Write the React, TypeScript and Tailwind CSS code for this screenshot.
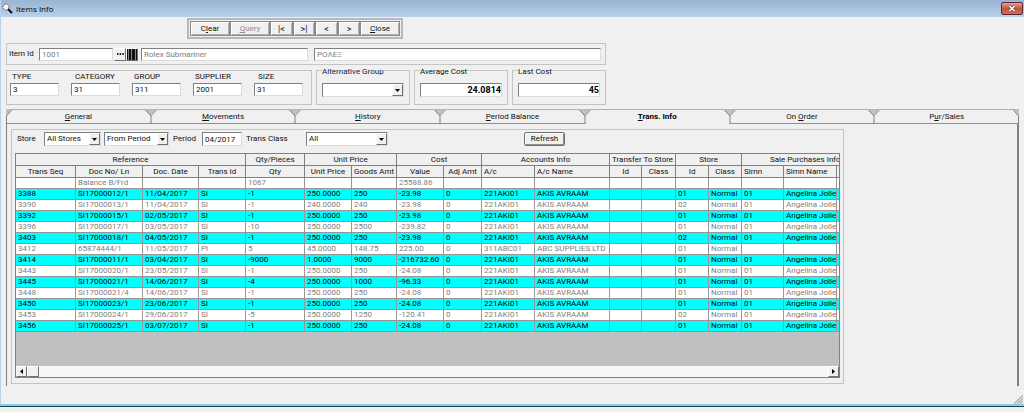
import { useState } from "react";
import type { ReactNode } from "react";
import clsx from "clsx";

type Row = string[];

const columns = [
  { label: "Trans Seq", width: "w-[60px]" },
  { label: "Doc No/ Ln", width: "w-[67px]" },
  { label: "Doc. Date", width: "w-[56px]" },
  { label: "Trans Id", width: "w-[47px]" },
  { label: "Qty", width: "w-[59px]" },
  { label: "Unit Price", width: "w-[47px]" },
  { label: "Goods Amt", width: "w-[45px]" },
  { label: "Value", width: "w-[47px]" },
  { label: "Adj Amt", width: "w-[38px]" },
  { label: "A/c", width: "w-[53px]", left: true },
  { label: "A/c Name", width: "w-[75px]", left: true },
  { label: "Id", width: "w-[32px]" },
  { label: "Class", width: "w-[34px]" },
  { label: "Id", width: "w-[33px]" },
  { label: "Class", width: "w-[33px]" },
  { label: "Slmn", width: "w-[42px]", left: true },
  { label: "Slmn Name", width: "w-[53px]", left: true },
  { label: "", width: "w-[60px]" },
];

const groups = [
  { label: "Reference", span: 4 },
  { label: "Qty/Pieces", span: 1 },
  { label: "Unit Price", span: 2 },
  { label: "Cost", span: 2 },
  { label: "Accounts Info", span: 2 },
  { label: "Transfer To Store", span: 2 },
  { label: "Store", span: 2 },
  { label: "Sale Purchases Information", span: 3 },
];

const sale = (
  seq: string,
  doc: string,
  date: string,
  qty: string,
  price: string,
  goods: string,
  value: string,
  store: string
): Row => [
  seq, doc, date, "SI", qty, price, goods, value, "0",
  "221AKI01", "AKIS AVRAAM", "", "", store, "Normal", "01", "Angelina Jolie", "",
];

const rows: Row[] = [
  ["", "Balance B/Frd", "", "", "1067", "", "", "25588.86", "", "", "", "", "", "", "", "", "", ""],
  sale("3388", "SI17000012/1", "11/04/2017", "-1", "250.0000", "250", "-23.98", "01"),
  sale("3390", "SI17000013/1", "11/04/2017", "-1", "240.0000", "240", "-23.98", "02"),
  sale("3392", "SI17000015/1", "02/05/2017", "-1", "250.0000", "250", "-23.98", "01"),
  sale("3396", "SI17000017/1", "03/05/2017", "-10", "250.0000", "2500", "-239.82", "01"),
  sale("3403", "SI17000018/1", "04/05/2017", "-1", "250.0000", "250", "-23.98", "02"),
  ["3412", "65874444/1", "11/05/2017", "PI", "5", "45.0000", "148.75", "225.00", "0", "311ABC01", "ABC SUPPLIES LTD", "", "", "01", "Normal", "", "", ""],
  sale("3414", "SI17000011/1", "03/04/2017", "-9000", "1.0000", "9000", "-216732.60", "01"),
  sale("3443", "SI17000020/1", "23/05/2017", "-1", "250.0000", "250", "-24.08", "01"),
  sale("3445", "SI17000021/1", "14/06/2017", "-4", "250.0000", "1000", "-96.33", "01"),
  sale("3448", "SI17000021/4", "14/06/2017", "-1", "250.0000", "250", "-24.08", "01"),
  sale("3450", "SI17000023/1", "23/06/2017", "-1", "250.0000", "250", "-24.08", "01"),
  sale("3453", "SI17000024/1", "29/06/2017", "-5", "250.0000", "1250", "-120.41", "02"),
  sale("3456", "SI17000025/1", "03/07/2017", "-1", "250.0000", "250", "-24.08", "01"),
];

const tabs: { id: string; label: ReactNode }[] = [
  { id: "general", label: <><u>G</u>eneral</> },
  { id: "movements", label: <><u>M</u>ovements</> },
  { id: "history", label: <><u>H</u>istory</> },
  { id: "balance", label: <><u>P</u>eriod Balance</> },
  { id: "trans", label: <><u>T</u>rans. Info</> },
  { id: "order", label: <>On <u>O</u>rder</> },
  { id: "sales", label: <>P<u>u</u>r/Sales</> },
];

const itemFields = [
  { id: "type", label: "TYPE", value: "3", indent: "pl-0.5" },
  { id: "category", label: "CATEGORY", value: "31", indent: "pl-1" },
  { id: "group", label: "GROUP", value: "311", indent: "pl-0.5" },
  { id: "supplier", label: "SUPPLIER", value: "2001", indent: "pl-0.5" },
  { id: "size", label: "SIZE", value: "31", indent: "pl-1" },
];

const sunken =
  "border border-t-[#808080] border-l-[#808080] border-r-[#dcdcdc] border-b-[#dcdcdc] bg-white";
const raised =
  "border border-t-white border-l-white border-r-[#707070] border-b-[#707070] bg-[#f0f0f0]";
const box = "border border-[#c4c4c4]";

function ToolButton({ children, className, disabled }: { children: ReactNode; className: string; disabled?: boolean }) {
  return (
    <button
      type="button"
      disabled={disabled}
      className={clsx(
        "flex h-[15px] items-center justify-center border border-[#8a8a8a] bg-[#f0f0f0] shadow-[inset_1px_1px_0_#fff,inset_-1px_-1px_0_#b0b0b0]",
        disabled && "text-[#8c8c8c]",
        className
      )}
    >
      {children}
    </button>
  );
}

function Select({ id, label, options, className }: { id: string; label: string; options: string[]; className: string }) {
  return (
    <div className={clsx("relative h-[14px]", sunken, className)}>
      <select id={id} aria-label={label} className="block h-3 w-full appearance-none bg-transparent pl-0.5 leading-3 outline-none">
        {options.map((o) => (
          <option key={o}>{o}</option>
        ))}
      </select>
      <span className={clsx("pointer-events-none absolute top-0 right-0 flex h-3 w-[11px] items-center justify-center", raised)}>
        <svg width="5" height="3" viewBox="0 0 5 3">
          <path d="M0 0h5L2.5 3z" fill="#000" />
        </svg>
      </span>
    </div>
  );
}

function TabNotch() {
  return (
    <svg className="absolute -top-px -right-[6px] z-10" width="12" height="15" viewBox="0 0 12 15">
      <path d="M0 0.5h12L6 7z" fill="#c0c0c0" />
      <path d="M0.5 1L6 7v8" fill="none" stroke="#808080" />
      <path d="M11.5 1L6 7" fill="none" stroke="#a0a0a0" />
    </svg>
  );
}

function TransGrid() {
  return (
    <div className="border border-[#808080] bg-[#c0c0c0]">
      <div className="h-[212px] overflow-hidden">
        <table className="w-[881px] table-fixed border-separate border-spacing-0">
          <colgroup>
            {columns.map((c, i) => (
              <col key={i} className={c.width} />
            ))}
          </colgroup>
          <thead>
            <tr className="h-3">
              {groups.map((g) => (
                <th
                  key={g.label}
                  colSpan={g.span}
                  className="h-3 overflow-hidden border-r border-b border-[#808080] bg-[#f0f0f0] p-0 leading-[11px] font-normal whitespace-nowrap"
                >
                  {g.label}
                </th>
              ))}
            </tr>
            <tr className="h-3">
              {columns.map((c, i) => (
                <th
                  key={i}
                  className={clsx(
                    "h-3 overflow-hidden border-r border-b border-[#808080] bg-[#f0f0f0] p-0 leading-[11px] font-normal whitespace-nowrap",
                    c.left && "pl-0.5 text-left"
                  )}
                >
                  {c.label}
                </th>
              ))}
            </tr>
          </thead>
          <tbody>
            {rows.map((row, r) => (
              <tr key={r} className={r % 2 ? "bg-[#00ffff] text-black" : "bg-white text-[#808080]"}>
                {row.map((cell, i) => (
                  <td
                    key={i}
                    className="h-[11px] overflow-hidden border-r border-b border-[#969696] py-0 pr-0 pl-0.5 leading-[10px] whitespace-nowrap"
                  >
                    {cell}
                  </td>
                ))}
              </tr>
            ))}
          </tbody>
        </table>
      </div>
      <div className="flex h-[11px] justify-between bg-[#f8f8f8]">
        <div className="flex">
          <button type="button" aria-label="Scroll left" className={clsx("flex w-[11px] items-center justify-center", raised)}>
            <svg width="3" height="5" viewBox="0 0 3 5">
              <path d="M3 0v5L0 2.5z" />
            </svg>
          </button>
          <div className={clsx("w-3", raised)} />
        </div>
        <button type="button" aria-label="Scroll right" className={clsx("flex w-[11px] items-center justify-center", raised)}>
          <svg width="3" height="5" viewBox="0 0 3 5">
            <path d="M0 0v5l3-2.5z" />
          </svg>
        </button>
      </div>
    </div>
  );
}

export default function App() {
  const [active, setActive] = useState("trans");

  return (
    <div className="min-h-screen bg-[#f0f0f0] font-['Roboto','Liberation_Sans',sans-serif] text-[8px] leading-[10px] text-[#101010]">
      <div className="border-b border-[#1f4552]">
        <div className="border-b-2 border-l border-b-[#7fd0e8] border-l-[#b9d1ea]">
          {/* Title bar */}
          <header className="flex h-[17px] items-center justify-between bg-linear-to-b from-[#98b4d2] to-[#b9d1ea] pr-px pl-px">
            <div className="flex items-center gap-[3px]">
              <svg width="11" height="11" viewBox="0 0 11 11">
                <path d="M5.5 5.5L10 10" stroke="#111" strokeWidth="2.2" />
                <circle cx="4" cy="4" r="3" fill="#fff" stroke="#555" strokeWidth="1" strokeDasharray="2 1" />
              </svg>
              <h1 className="font-['Open_Sans',sans-serif] text-black">Items Info</h1>
            </div>
            <button
              type="button"
              aria-label="Close window"
              className="flex h-[13px] w-[22px] items-center justify-center rounded-xs border border-[#5a2a35] bg-linear-to-b from-[#e5a093] via-[#c8503c] to-[#cf6a50]"
            >
              <svg width="8" height="7" viewBox="0 0 8 7">
                <path d="M1.5 1l5 5M6.5 1l-5 5" stroke="#53535f" strokeWidth="2.8" />
                <path d="M1.5 1l5 5M6.5 1l-5 5" stroke="#fff" strokeWidth="1.5" />
              </svg>
            </button>
          </header>

          <main className="px-[5px] pt-px">
            {/* Toolbar */}
            <div className="ml-[181px] flex w-[216px] border-2 border-[#b8b8b8] p-px">
              <ToolButton className="w-[40px]"><span>C<u>l</u>ear</span></ToolButton>
              <ToolButton className="w-[40px]" disabled><span><u>Q</u>uery</span></ToolButton>
              <ToolButton className="w-[23px] text-[9px]">|&lt;</ToolButton>
              <ToolButton className="w-[22px] text-[9px]">&gt;|</ToolButton>
              <ToolButton className="w-[23px] text-[9px]">&lt;</ToolButton>
              <ToolButton className="w-[22px] text-[9px]">&gt;</ToolButton>
              <ToolButton className="w-[40px]"><span><u>C</u>lose</span></ToolButton>
            </div>

            {/* Item */}
            <div className={clsx("mt-1 flex h-[22px] max-w-[600px] items-center pr-1 pl-0.5", box)}>
              <label htmlFor="item-id" className="w-[30px]">Item Id</label>
              <input id="item-id" defaultValue="1001" className={clsx("h-[13px] w-[74px] pl-0.5 text-[#808080]", sunken)} />
              <button type="button" aria-label="Find item" className={clsx("ml-px flex h-[13px] w-3 items-center justify-center gap-px", raised)}>
                <svg width="7" height="2" viewBox="0 0 7 2">
                  <path d="M0 0h1.5v2H0zM2.7 0h1.5v2H2.7zM5.4 0h1.5v2H5.4z" fill="#222" />
                </svg>
              </button>
              <button type="button" aria-label="Barcode" className={clsx("flex h-[13px] w-3 items-center justify-center", raised)}>
                <svg width="10" height="11" viewBox="0 0 10 11">
                  <path d="M0 0h10v11H0z" fill="#888" />
                  <path d="M0 0h1v11H0zM2 0h2v11H2zM5 0h3v11H5zM9 0h1v11H9z" fill="#111" />
                </svg>
              </button>
              <input aria-label="Item name" defaultValue="Rolex Submariner" className={clsx("ml-[3px] h-[13px] w-[167px] pl-0.5 text-[#808080]", sunken)} />
              <input aria-label="Item alternative name" defaultValue="ΡΟΛΕΞ" className={clsx("ml-1.5 h-[13px] min-w-0 flex-1 pl-0.5 text-[#808080]", sunken)} />
            </div>

            {/* Classification and cost */}
            <div className="flex items-end gap-1">
              <div className={clsx("flex h-[35px] w-[306px] items-end gap-3 pb-2 pl-[3px]", box)}>
                {itemFields.map((f) => (
                  <div key={f.id} className="w-[49px]">
                    <label htmlFor={f.id} className={clsx("block pb-px", f.indent)}>{f.label}</label>
                    <input id={f.id} defaultValue={f.value} className={clsx("block h-[13px] w-full pl-0.5", sunken)} />
                  </div>
                ))}
              </div>
              <fieldset className={clsx("h-[40px] w-[94px] px-[5px] pt-[7px]", box)}>
                <legend className="pt-0.5 leading-[9px] text-[#202040]">Alternative Group</legend>
                <Select id="alt-group" label="Alternative Group" options={[""]} className="w-full" />
              </fieldset>
              <fieldset className={clsx("h-[40px] w-[94px] px-[5px] pt-[7px]", box)}>
                <legend className="pt-0.5 leading-[9px]">Average Cost</legend>
                <input aria-label="Average Cost" defaultValue="24.0814" className={clsx("block h-[14px] w-full text-right text-[9px] font-bold text-black", sunken)} />
              </fieldset>
              <fieldset className={clsx("h-[40px] w-[94px] px-[5px] pt-[7px]", box)}>
                <legend className="pt-0.5 leading-[9px]">Last Cost</legend>
                <input aria-label="Last Cost" defaultValue="45" className={clsx("block h-[14px] w-full text-right text-[9px] font-bold text-black", sunken)} />
              </fieldset>
            </div>

            {/* Tabs */}
            <div role="tablist" className="mt-1 flex">
              {tabs.map((t, i) => (
                <button
                  key={t.id}
                  type="button"
                  role="tab"
                  aria-selected={t.id === active}
                  onClick={() => setActive(t.id)}
                  className={clsx(
                    "relative h-[15px] flex-1 border-t border-b border-t-[#b0b0b0]",
                    t.id === active ? "border-b-transparent font-bold text-black" : "border-b-[#909090]"
                  )}
                >
                  {t.label}
                  {i === 0 && (
                    <svg className="absolute -top-px left-0" width="7" height="15" viewBox="0 0 7 15">
                      <path d="M0 0h6L0 7z" fill="#c0c0c0" />
                      <path d="M6 0.5L0.5 7v8" fill="none" stroke="#808080" />
                    </svg>
                  )}
                  {i < tabs.length - 1 ? (
                    <TabNotch />
                  ) : (
                    <svg className="absolute -top-px right-0" width="7" height="15" viewBox="0 0 7 15">
                      <path d="M1 0h6v7z" fill="#c0c0c0" />
                      <path d="M1 0.5L6.5 7v8" fill="none" stroke="#808080" />
                    </svg>
                  )}
                </button>
              ))}
            </div>

            <section role="tabpanel" className="border-r-2 border-l border-[#808080] px-1 pt-[5px] pb-0.5">
              <div className={clsx("max-w-[833px] px-[3px] pt-0.5 pb-[5px]", box)}>
                <div className="flex items-center pb-[7px] pl-0.5">
                  <label htmlFor="store" className="w-[27px]">Store</label>
                  <Select id="store" label="Store" options={["All Stores"]} className="w-[57px]" />
                  <Select id="from" label="From Period" options={["From Period"]} className="ml-[3px] w-[65px]" />
                  <label htmlFor="period" className="ml-1 w-[29px]">Period</label>
                  <input id="period" defaultValue="04/2017" className={clsx("h-[14px] w-[40px] pl-0.5", sunken)} />
                  <label htmlFor="trans-class" className="ml-1 w-[60px]">Trans Class</label>
                  <Select id="trans-class" label="Trans Class" options={["All"]} className="w-[82px]" />
                  <button
                    type="button"
                    className="ml-[136px] h-[14px] w-[41px] rounded-xs border border-[#707070] leading-3 shadow-[inset_1px_1px_0_#fff,inset_-1px_-1px_0_#909090]"
                  >
                    Refresh
                  </button>
                </div>
                <TransGrid />
              </div>
            </section>

            <div className="flex h-[18px] items-end justify-end">
              <svg className="-mr-1" width="9" height="9" viewBox="0 0 9 9">
                <path d="M0 9L9 0M3 9l6-6M6 9l3-3" stroke="#a8a8a8" strokeWidth="1.2" />
              </svg>
            </div>
          </main>
        </div>
      </div>
    </div>
  );
}
